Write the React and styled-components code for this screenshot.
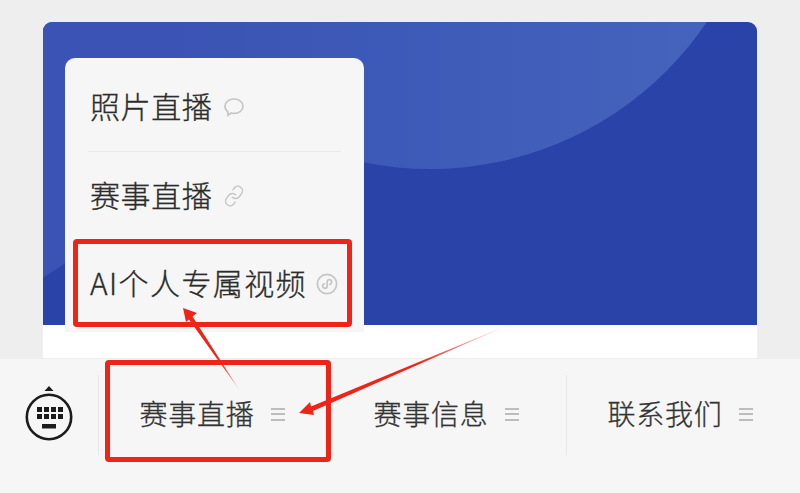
import styled, { createGlobalStyle } from "styled-components"
import { Link } from "lucide-react"

const GlobalStyle = createGlobalStyle`
    html, body { margin: 0; padding: 0; }
    body {
        width: 800px;
        height: 493px;
        overflow: hidden;
        background: #eeeeee;
        font-family: "Noto Sans CJK SC", "Noto Sans", sans-serif;
    }
`

const Page = styled.div`
    position: relative;
    width: 800px;
    height: 493px;
    display: flex;
    flex-direction: column;
    overflow: hidden;
`

// ─── Banner card ───────────────────────────────────────────────

const Content = styled.div`
    height: 358px;
    flex-shrink: 0;
    padding: 22px 43px 0;
    box-sizing: border-box;
`

const Card = styled.div`
    position: relative;
    height: 336px;
    background: #ffffff;
    border-radius: 9px 9px 0 0;
`

const Banner = styled.div`
    position: relative;
    height: 303px;
    background: #2a43a8;
    border-radius: 9px 9px 0 0;
    overflow: hidden;
`

const Glow = styled.div`
    position: absolute;
    left: ${ ( { $x, $r } ) => $x - $r }px;
    top: ${ ( { $y, $r } ) => $y - $r }px;
    width: ${ ( { $r } ) => $r * 2 }px;
    height: ${ ( { $r } ) => $r * 2 }px;
    border-radius: 50%;
    background: ${ ( { $fill } ) => $fill };
`

const Menu = styled.div`
    position: absolute;
    left: 22px;
    top: 36px;
    width: 299px;
    height: 274px;
    padding: 0 23px;
    box-sizing: border-box;
    background: #f6f6f6;
    border-radius: 10px 10px 0 0;
`

const MenuRow = styled.div`
    position: relative;
    height: ${ ( { $h } ) => $h }px;
    padding-top: ${ ( { $pt } ) => $pt || 0 }px;
    padding-left: 2px;
    box-sizing: border-box;
    display: flex;
    align-items: center;
    gap: ${ ( { $gap } ) => $gap || 11 }px;
    border-bottom: ${ ( { $line } ) => $line ? "1px solid #e9e9e9" : "none" };
`

const MenuLabel = styled.span`
    margin-bottom: 4px;
    font-size: 30px;
    font-weight: 300;
    -webkit-text-stroke: 0.3px #2c2c2c;
    letter-spacing: ${ ( { $spacing } ) => $spacing || 0.6 }px;
    color: #2c2c2c;
`

const RowIcon = styled.span`
    display: flex;
    color: #c6c6c6;
`

const ChainSlot = styled( RowIcon )`
    transform: rotate( -8deg );
`

// ─── Bottom bar ────────────────────────────────────────────────

const Bar = styled.div`
    flex: 1;
    display: flex;
    background: #f6f6f6;
    border-top: 1px solid #eeeeee;
    box-sizing: border-box;
`

const KeyboardSlot = styled.div`
    width: 98px;
    flex-shrink: 0;
    display: flex;
    justify-content: center;
    padding-top: 27px;
    box-sizing: border-box;
`

const Tab = styled.div`
    position: relative;
    flex: 1;
    height: 80px;
    margin-top: 16px;
    padding: 0 7px 2px 0;
    box-sizing: border-box;
    display: flex;
    align-items: center;
    justify-content: center;
    gap: 16px;
    border-left: 1px solid #e8e8e8;
`

const TabLabel = styled.span`
    margin-bottom: 2px;
    font-size: 28px;
    font-weight: 300;
    -webkit-text-stroke: 0.3px #333333;
    letter-spacing: 0.8px;
    color: #333333;
`

const TabLines = styled.span`
    width: 14px;
    height: 13px;
    flex-shrink: 0;
    border-top: 2px solid #bdbdbd;
    border-bottom: 2px solid #bdbdbd;
    box-sizing: border-box;
    background: linear-gradient( #bdbdbd, #bdbdbd ) center / 100% 2px no-repeat;
`

// ─── Red annotations ───────────────────────────────────────────

const Highlight = styled.div`
    position: absolute;
    left: ${ ( { $l } ) => $l }px;
    top: ${ ( { $t } ) => $t }px;
    width: ${ ( { $w } ) => $w }px;
    height: ${ ( { $h } ) => $h }px;
    box-sizing: border-box;
    border: 5px solid #ee2419;
    border-radius: 4px;
`

const Arrows = styled.svg`
    position: absolute;
    left: 0;
    top: 0;
    pointer-events: none;
`

function BubbleIcon() {
    return <svg width="22" height="21" viewBox="0 0 22 21" fill="none" stroke="currentColor" strokeWidth="1.7">
        <path d="M11 2C16.2 2 20 5.1 20 9.2C20 13.3 16.2 16.4 11 16.4C10 16.4 9.1 16.3 8.2 16L5 18.4L4.9 14.6C3 13.3 2 11.4 2 9.2C2 5.1 5.8 2 11 2Z" />
    </svg>
}

function MiniProgramIcon() {
    return <svg width="22" height="22" viewBox="0 0 22 22" fill="none" stroke="currentColor" strokeWidth="1.7">
        <circle cx="11" cy="11" r="9.6" />
        <path d="M6.6 12.6C6.6 14.2 7.8 15.3 9.1 15.3C10.4 15.3 11.1 14.2 11.1 13V9C11.1 7.8 11.9 6.7 13.2 6.7C14.5 6.7 15.6 7.8 15.6 9.2C15.6 10.4 14.7 11.2 13.8 11.4M8.3 10.9C7.5 11.1 6.6 11.6 6.6 12.6" strokeLinecap="round" />
    </svg>
}

function KeyboardIcon() {
    const keys = []
    for( let row = 0; row < 2; row++ ) {
        for( let col = 0; col < 4; col++ ) {
            keys.push( <rect key={ `${ row }-${ col }` } x={ 12 + col * 7 } y={ 21 + row * 7 } width="5" height="5" /> )
        }
    }
    return <svg width="48" height="56" viewBox="0 0 48 56" fill="#1c1c1c">
        <path d="M24 0L28.5 5H19.5Z" />
        <circle cx="24" cy="31" r="22.2" fill="none" stroke="#1c1c1c" strokeWidth="2.6" />
        { keys }
        <rect x="17" y="38" width="14" height="4.5" />
    </svg>
}

const menu_tabs = [ "赛事直播", "赛事信息", "联系我们" ]

export default function App() {

    return <Page>

        <GlobalStyle />

        <Content>
            <Card>
                <Banner>
                    <Glow $x={ -140 } $y={ 13 } $r={ 280 } $fill="#3a53b4" />
                    <Glow $x={ 387 } $y={ -187 } $r={ 334 } $fill="linear-gradient( 90deg, #3a53b4 10%, #3f5cb9 55%, #4563bc 90% )" />
                </Banner>
                <Menu>
                    <MenuRow $h={ 94 } $pt={ 5 } $line>
                        <MenuLabel>照片直播</MenuLabel>
                        <RowIcon><BubbleIcon /></RowIcon>
                    </MenuRow>
                    <MenuRow $h={ 88 }>
                        <MenuLabel>赛事直播</MenuLabel>
                        <ChainSlot><Link size={ 22 } strokeWidth={ 1.6 } /></ChainSlot>
                    </MenuRow>
                    <MenuRow $h={ 88 } $gap={ 9 }>
                        <MenuLabel $spacing={ 1.4 }>AI个人专属视频</MenuLabel>
                        <RowIcon><MiniProgramIcon /></RowIcon>
                        <Highlight $l={ -15 } $t={ -1 } $w={ 279 } $h={ 88 } />
                    </MenuRow>
                </Menu>
            </Card>
        </Content>

        <Bar>
            <KeyboardSlot><KeyboardIcon /></KeyboardSlot>
            { menu_tabs.map( ( label, i ) => <Tab key={ label }>
                <TabLabel>{ label }</TabLabel>
                <TabLines />
                { i === 0 && <Highlight $l={ 6 } $t={ -15 } $w={ 226 } $h={ 102 } /> }
            </Tab> ) }
        </Bar>

        <Arrows width="800" height="493" viewBox="0 0 800 493">
            <defs>
                <linearGradient id="fade-a" gradientUnits="userSpaceOnUse" x1="190" y1="318" x2="240" y2="392">
                    <stop offset="0.6" stopColor="#ee2419" />
                    <stop offset="1" stopColor="#ee2419" stopOpacity="0.15" />
                </linearGradient>
                <linearGradient id="fade-b" gradientUnits="userSpaceOnUse" x1="310" y1="407" x2="506" y2="326">
                    <stop offset="0.55" stopColor="#ee2419" />
                    <stop offset="1" stopColor="#ee2419" stopOpacity="0.1" />
                </linearGradient>
            </defs>
            <path d="M183 308L197 313L192.5 316.5L240 391L189 319.5L186 322Z" fill="url(#fade-a)" />
            <path d="M299 413L310 402L311 406.5L506 326L313 411L314 415Z" fill="url(#fade-b)" />
        </Arrows>

    </Page>

}
